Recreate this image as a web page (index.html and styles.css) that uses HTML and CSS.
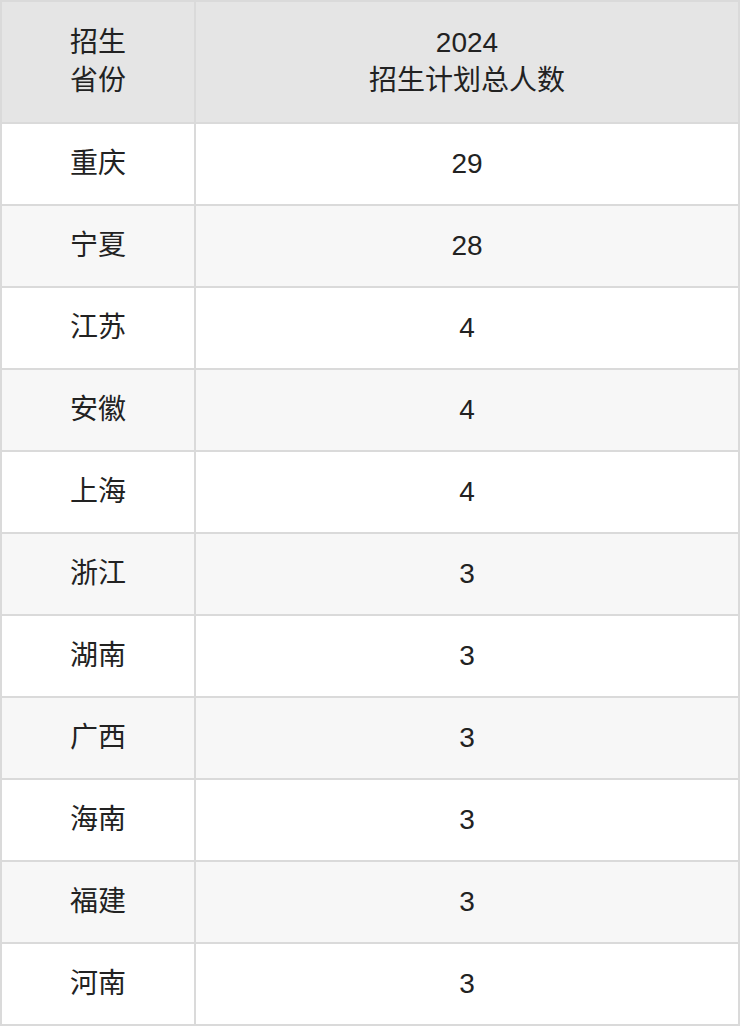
FILE: index.html
```html
<!DOCTYPE html>
<html lang="zh">
<head>
<meta charset="utf-8">
<link rel="stylesheet" href="styles.css">
</head>
<body>
<div class="table">
  <div class="cell head">招生<br>省份</div>
  <div class="cell head">2024<br>招生计划总人数</div>
  <div class="cell">重庆</div><div class="cell">29</div>
  <div class="cell alt">宁夏</div><div class="cell alt">28</div>
  <div class="cell">江苏</div><div class="cell">4</div>
  <div class="cell alt">安徽</div><div class="cell alt">4</div>
  <div class="cell">上海</div><div class="cell">4</div>
  <div class="cell alt">浙江</div><div class="cell alt">3</div>
  <div class="cell">湖南</div><div class="cell">3</div>
  <div class="cell alt">广西</div><div class="cell alt">3</div>
  <div class="cell">海南</div><div class="cell">3</div>
  <div class="cell alt">福建</div><div class="cell alt">3</div>
  <div class="cell">河南</div><div class="cell">3</div>
</div>
</body>
</html>
```
FILE: styles.css
```css
html, body {
  margin: 0;
  padding: 0;
  background: #ffffff;
}
.table {
  width: 740px;
  box-sizing: border-box;
  padding: 2px;
  background: #dadada;
  display: grid;
  grid-template-columns: 192px 1fr;
  grid-template-rows: 120px;
  grid-auto-rows: 80px;
  gap: 2px;
  font-family: "Liberation Sans", "Noto Sans CJK SC", sans-serif;
  font-size: 28px;
  color: #222222;
}
.cell {
  background: #ffffff;
  display: flex;
  align-items: center;
  justify-content: center;
  text-align: center;
  line-height: 38px;
}
.cell.alt {
  background: #f7f7f7;
}
.cell.head {
  background: #e5e5e5;
}
```
